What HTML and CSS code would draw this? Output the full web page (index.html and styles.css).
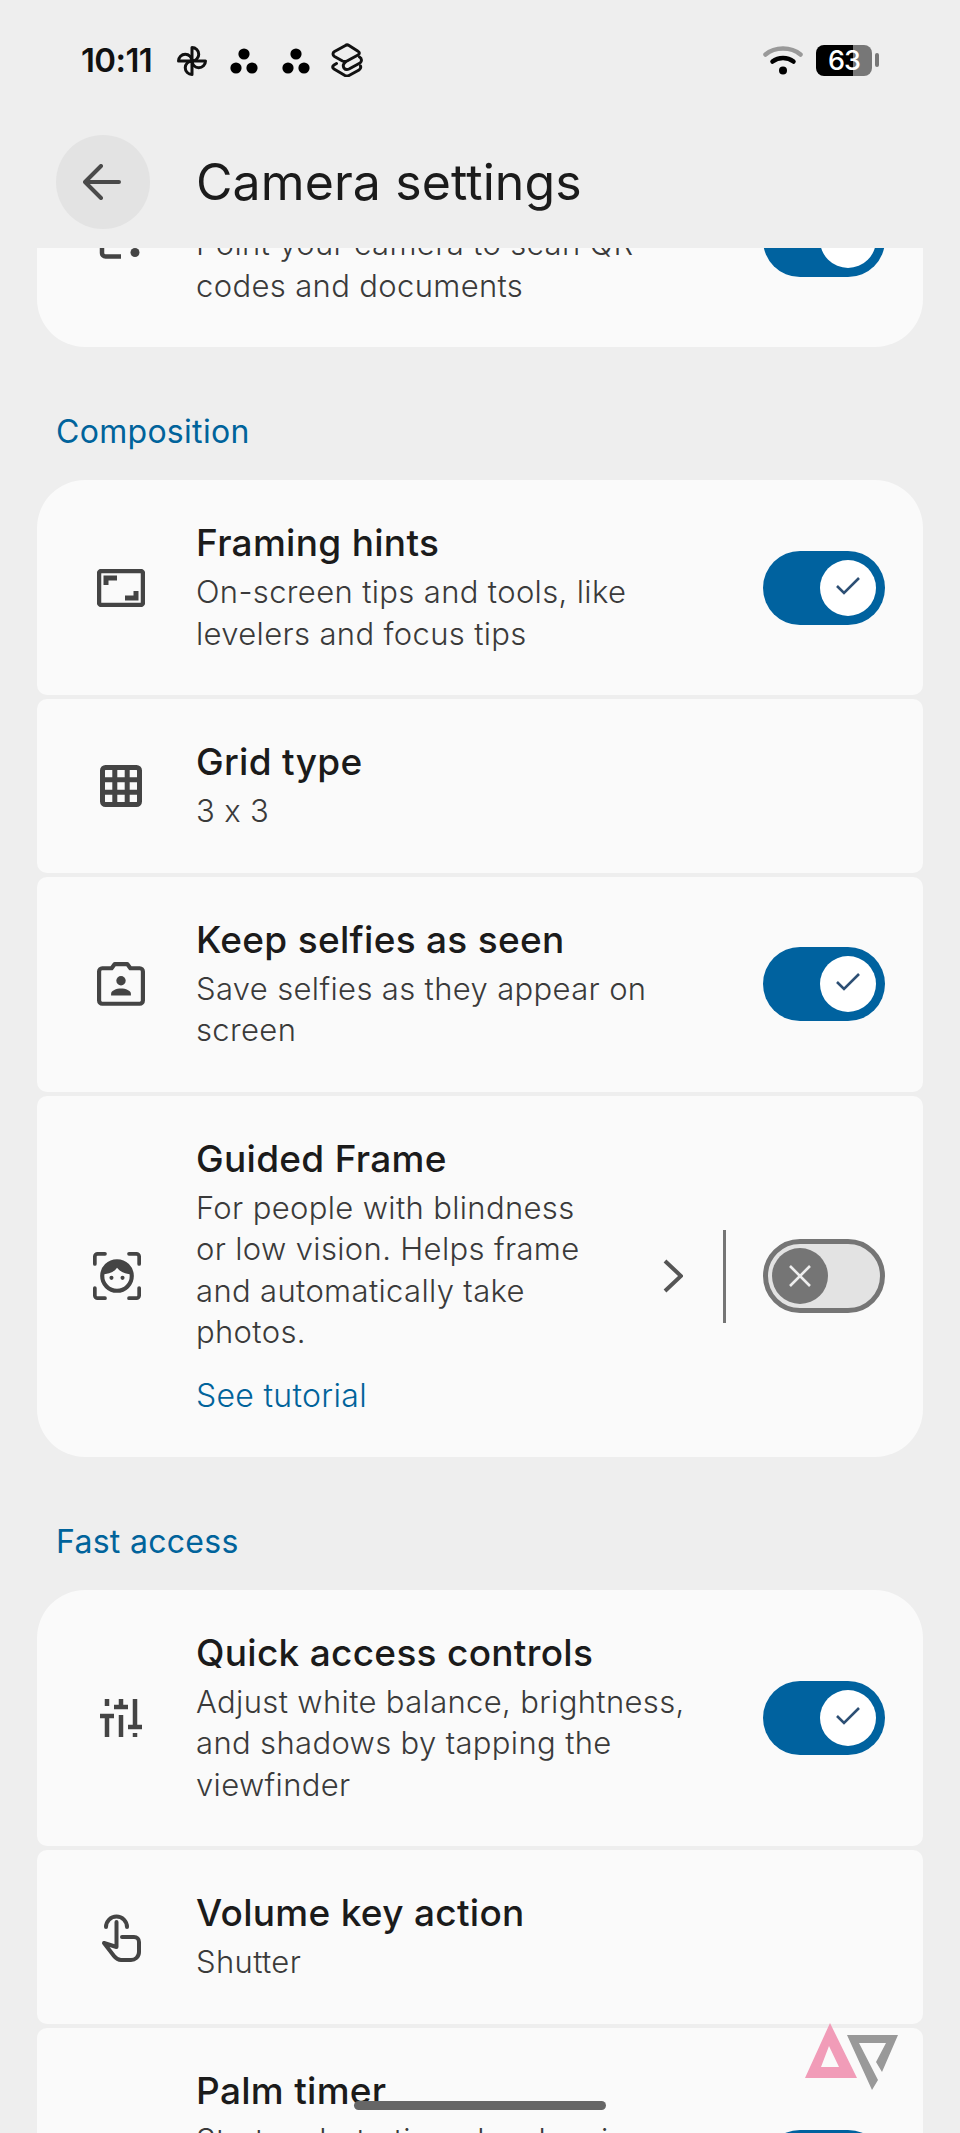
FILE: index.html
```html
<!DOCTYPE html>
<html lang="en">
<head>
    <meta charset="UTF-8">
    <meta name="viewport" content="width=device-width, initial-scale=1.0">
    <title>Camera settings</title>
    <link rel="stylesheet" href="styles.css">
</head>
<body>
    <div class="phone">
        <div class="status-bar">
            <span class="clock">10:11</span>
            <svg class="st-pinwheel" viewBox="0 0 32 32" fill="none" stroke="#111" stroke-width="3" stroke-linejoin="round">
                <path d="M16 16V2.500a6.700 6.700 0 0 1 0 13.500z"/>
                <path d="M16 16h13.500a6.700 6.700 0 0 1-13.500 0z"/>
                <path d="M16 16v13.500a6.700 6.700 0 0 1 0-13.500z"/>
                <path d="M16 16H2.500a6.700 6.700 0 0 1 13.500 0z"/>
            </svg>
            <svg class="st-dots" viewBox="0 0 28 26" fill="#000"><circle cx="14" cy="6" r="5.600"/><circle cx="6" cy="20" r="5.600"/><circle cx="22" cy="20" r="5.600"/></svg>
            <svg class="st-dots" viewBox="0 0 28 26" fill="#000"><circle cx="14" cy="6" r="5.600"/><circle cx="6" cy="20" r="5.600"/><circle cx="22" cy="20" r="5.600"/></svg>
            <svg class="st-stack" viewBox="0 0 32 34" fill="none" stroke="#111" stroke-width="3" stroke-linejoin="round" stroke-linecap="round">
                <path d="M14.500 2.500 3.500 8.500c-2 1.200-2 3.800 0 5l8 4.500c1.500.8 3 .8 4.500 0l11-6c1.800-1 1.800-2.800 0-3.800l-9-5.700c-1.300-.8-2.500-.8-3.500 0z"/>
                <path d="M28.500 14c2.500 1.500 2.500 4.500.5 6l-11 6c-2 1-4 .3-5-1-1.300-1.800-.8-4.500 1.500-6"/>
                <path d="M5.500 20.500 3 22c-1.800 1.200-1.800 3 0 4l11 6.500c1.300.7 2.700.7 4 0l10-5.500c1.500-1 2-2.500 1.500-4"/>
            </svg>
            <div class="status-right">
                <svg class="st-wifi" viewBox="0 0 40 30" fill="none" stroke-linecap="round">
                    <path d="M2.500 9.500C12 1.500 28 1.500 37.500 9.500" stroke="#999" stroke-width="4.500"/>
                    <path d="M9.500 16.500C15.500 11.800 24.500 11.800 30.500 16.500" stroke="#000" stroke-width="4.500"/>
                    <circle cx="20" cy="25.500" r="4" fill="#000"/>
                </svg>
                <div class="battery"><span class="battery-num">63</span></div>
                <span class="battery-nub"></span>
            </div>
        </div>

        <header class="top-bar">
            <div class="back-btn">
                <svg viewBox="0 0 38 36" fill="none" stroke="#4a4a4a" stroke-width="4" stroke-linecap="round" stroke-linejoin="round"><path d="M36 18H3M18 2 2 18l16 16"/></svg>
            </div>
            <h1>Camera settings</h1>
        </header>

        <main class="list">
            <div class="group group-scrolled">
                <div class="row row-last">
                    <div class="row-icon">
                        <svg viewBox="0 0 48 48" fill="none" stroke="#444" stroke-width="4.500"><path d="M5 28v9a3.500 3.500 0 0 0 3.500 3.500H24"/><circle cx="38" cy="36.500" r="4.500" fill="#444" stroke="none"/></svg>
                    </div>
                    <div class="row-text">
                        <div class="row-title">Scan with camera</div>
                        <div class="row-sub">Point your camera to scan QR<br>codes and documents</div>
                    </div>
                    <div class="toggle on"><span class="knob"><svg viewBox="0 0 24 24" fill="none" stroke="#2d4f74" stroke-width="2.600"><path d="M1 10l7 7L23 2"/></svg></span></div>
                </div>
            </div>

            <h2 class="section">Composition</h2>
            <div class="group">
                <div class="row row-first">
                    <div class="row-icon">
                        <svg viewBox="0 0 48 38" fill="none" stroke="#444"><rect x="2" y="2" width="44" height="34" rx="2.500" stroke-width="4.500"/><path d="M9 16V9h11M39 22v7H28" stroke-width="5"/></svg>
                    </div>
                    <div class="row-text">
                        <div class="row-title">Framing hints</div>
                        <div class="row-sub">On-screen tips and tools, like<br>levelers and focus tips</div>
                    </div>
                    <div class="toggle on"><span class="knob"><svg viewBox="0 0 24 24" fill="none" stroke="#2d4f74" stroke-width="2.600"><path d="M1 10l7 7L23 2"/></svg></span></div>
                </div>
                <div class="row">
                    <div class="row-icon">
                        <svg class="icon-grid" viewBox="0 0 42 42" fill="none" stroke="#444" stroke-width="5"><rect x="2.500" y="2.500" width="37" height="37" rx="3"/><path d="M14.800 2v38M27.200 2v38M2 14.800h38M2 27.200h38"/></svg>
                    </div>
                    <div class="row-text">
                        <div class="row-title">Grid type</div>
                        <div class="row-sub">3 x 3</div>
                    </div>
                </div>
                <div class="row">
                    <div class="row-icon">
                        <svg viewBox="0 0 46 42" fill="none" stroke="#444" stroke-width="4" stroke-linejoin="round"><path d="M5 6h9l3-4h12l3 4h9a3 3 0 0 1 3 3v28a3 3 0 0 1-3 3H5a3 3 0 0 1-3-3V9a3 3 0 0 1 3-3z"/><circle cx="23" cy="18" r="4.500" fill="#444" stroke="none"/><path d="M13.500 32v-1.500c0-3 5-5 9.500-5s9.500 2 9.500 5V32z" fill="#444" stroke="none"/></svg>
                    </div>
                    <div class="row-text">
                        <div class="row-title">Keep selfies as seen</div>
                        <div class="row-sub">Save selfies as they appear on<br>screen</div>
                    </div>
                    <div class="toggle on"><span class="knob"><svg viewBox="0 0 24 24" fill="none" stroke="#2d4f74" stroke-width="2.600"><path d="M1 10l7 7L23 2"/></svg></span></div>
                </div>
                <div class="row row-last">
                    <div class="row-icon row-icon-guided">
                        <svg viewBox="0 0 52 52" fill="none" stroke="#444" stroke-width="4"><path d="M2 13V5a3 3 0 0 1 3-3h8M39 2h8a3 3 0 0 1 3 3v8M2 39v8a3 3 0 0 0 3 3h8M50 39v8a3 3 0 0 1-3 3h-8" stroke-linecap="round"/><circle cx="26" cy="26" r="16" stroke-width="4.500"/><path d="M10 24C11 14 18 9 26 9s15 5 16 15c-6 0-12-2-16-7-3 5-10 7-16 7z" fill="#444" stroke="none"/><circle cx="20" cy="28" r="2.200" fill="#444" stroke="none"/><circle cx="32" cy="28" r="2.200" fill="#444" stroke="none"/></svg>
                    </div>
                    <div class="row-text">
                        <div class="row-title">Guided Frame</div>
                        <div class="row-sub">For people with blindness<br>or low vision. Helps frame<br>and automatically take<br>photos.</div>
                        <div class="row-link">See tutorial</div>
                    </div>
                    <svg class="chevron" viewBox="0 0 20 34" fill="none" stroke="#555" stroke-width="4"><path d="M2 2l16 15L2 32"/></svg>
                    <span class="divider"></span>
                    <div class="toggle off"><span class="knob"><svg viewBox="0 0 24 24" fill="none" stroke="#eee" stroke-width="2.600"><path d="M2 2l20 20M22 2 2 22"/></svg></span></div>
                </div>
            </div>

            <h2 class="section">Fast access</h2>
            <div class="group">
                <div class="row row-first">
                    <div class="row-icon">
                        <svg class="icon-sliders" viewBox="0 0 42 38" fill="none" stroke="#444" stroke-width="4.500"><path d="M7 0v7M7 17v21M21 0v8M21 16v22M35 0v27M35 34v4M0 17h14M14 8h14M28 28h14"/></svg>
                    </div>
                    <div class="row-text">
                        <div class="row-title">Quick access controls</div>
                        <div class="row-sub">Adjust white balance, brightness,<br>and shadows by tapping the<br>viewfinder</div>
                    </div>
                    <div class="toggle on"><span class="knob"><svg viewBox="0 0 24 24" fill="none" stroke="#2d4f74" stroke-width="2.600"><path d="M1 10l7 7L23 2"/></svg></span></div>
                </div>
                <div class="row">
                    <div class="row-icon">
                        <svg class="icon-touch" viewBox="0 0 40 50" fill="none" stroke="#444" stroke-width="4" stroke-linecap="round" stroke-linejoin="round"><path d="M5 15a10.500 10.500 0 1 1 21 0"/><path d="M15.500 10v25L3 31l10 13c2 2.500 4 4 7 4h10c4 0 8-3 8-8V30c0-3-2-5-5-5H21"/></svg>
                    </div>
                    <div class="row-text">
                        <div class="row-title">Volume key action</div>
                        <div class="row-sub">Shutter</div>
                    </div>
                </div>
                <div class="row row-palm">
                    <div class="row-icon"></div>
                    <div class="row-text">
                        <div class="row-title">Palm timer</div>
                        <div class="row-sub">Start a photo timer by showing<br>your palm</div>
                    </div>
                    <div class="toggle on"><span class="knob"><svg viewBox="0 0 24 24" fill="none" stroke="#2d4f74" stroke-width="2.600"><path d="M1 10l7 7L23 2"/></svg></span></div>
                </div>
            </div>
        </main>

        <svg class="watermark" viewBox="0 0 94 68">
            <path d="M25 0 52 55H0zM24 23 16 44h18z" fill="#f19cb8" fill-rule="evenodd"/>
            <path d="M42 12H93L77 49 71 39 81 20H54L73 57 67 67z" fill="#999"/>
        </svg>
        <div class="home-pill"></div>
    </div>
</body>
</html>
```

FILE: styles.css
```css
* {
    box-sizing: border-box;
}
body {
    margin: 0;
    background: #eeeeee;
    font-family: Inter, Roboto, sans-serif;
    font-feature-settings: "calt" 0;
}
.phone {
    position: relative;
    width: 960px;
    height: 2133px;
    overflow: hidden;
    display: flex;
    flex-direction: column;
}

/* status bar */
.status-bar {
    height: 120px;
    flex: none;
    display: flex;
    align-items: center;
    padding: 0 76px 0 81px;
}
.clock {
    font-size: 33px;
    font-weight: 600;
    color: #111;
    letter-spacing: -0.6px;
    width: 95px;
}
.st-pinwheel {
    width: 32px;
    height: 32px;
    margin-top: 1px;
}
.st-dots {
    width: 28px;
    height: 26px;
    margin-left: 22px;
    margin-top: 1px;
}
.st-dots + .st-dots {
    margin-left: 24px;
}
.st-stack {
    width: 32px;
    height: 34px;
    margin-left: 21px;
}
.status-right {
    margin-left: auto;
    display: flex;
    align-items: center;
    margin-right: 5px;
}
.st-wifi {
    width: 40px;
    height: 30px;
}
.battery {
    width: 56px;
    height: 31px;
    margin-left: 13px;
    border-radius: 8px;
    background: linear-gradient(90deg, #000 0, #000 66%, #777 66%, #777 100%);
    display: flex;
    align-items: center;
    justify-content: center;
}
.battery-num {
    color: #fff;
    font-size: 27px;
    font-weight: 500;
    letter-spacing: -1px;
}
.battery-nub {
    width: 4px;
    height: 14px;
    margin-left: 3px;
    background: #777;
    border-radius: 2px;
}

/* header */
.top-bar {
    height: 128px;
    flex: none;
    display: flex;
    align-items: flex-start;
    padding: 15px 0 0 56px;
    background: #eeeeee;
}
.back-btn {
    width: 94px;
    height: 94px;
    border-radius: 50%;
    background: #e3e3e3;
    display: flex;
    align-items: center;
    justify-content: center;
}
.back-btn svg {
    width: 38px;
    height: 36px;
    margin-right: 3px;
}
.top-bar h1 {
    margin: 0 0 0 46px;
    font-size: 50px;
    line-height: 94px;
    font-weight: 400;
    letter-spacing: 0.1px;
    color: #1b1b1b;
}

/* list */
.list {
    flex: 1;
    overflow: hidden;
}
.group {
    margin: 0 37px;
    display: flex;
    flex-direction: column;
    gap: 4px;
}
.group-scrolled {
    margin-top: -116px;
}
.section {
    margin: 0;
    height: 133px;
    padding: 65px 0 0 56px;
    font-size: 32px;
    line-height: 40px;
    font-weight: 400;
    letter-spacing: 0.3px;
    color: #00639b;
}
.row {
    display: flex;
    align-items: center;
    padding: 41px 38px 41px 60px;
    background: #fafafa;
    border-radius: 10px;
}
.row-first {
    border-top-left-radius: 48px;
    border-top-right-radius: 48px;
}
.row-last {
    border-bottom-left-radius: 48px;
    border-bottom-right-radius: 48px;
}
.row-palm {
    min-height: 278px;
}
.row-palm .row-text {
    align-self: flex-start;
}
.row-icon {
    width: 48px;
    flex: none;
    margin-right: 51px;
    display: flex;
    justify-content: center;
}
.row-icon svg {
    width: 48px;
    display: block;
}
.row-icon .icon-grid,
.row-icon .icon-sliders {
    width: 42px;
}
.row-icon .icon-touch {
    width: 40px;
}
.row-icon-guided {
    justify-content: flex-start;
    margin-left: -4px;
    margin-right: 55px;
}
.row-icon-guided svg {
    width: 52px;
}
.row-text {
    flex: 1;
    min-width: 0;
}
.row-title {
    font-size: 37px;
    line-height: 44px;
    margin-bottom: 6px;
    font-weight: 450;
    letter-spacing: 0.3px;
    color: #1b1b1b;
}
.row-sub {
    font-size: 31px;
    line-height: 41.500px;
    font-weight: 300;
    letter-spacing: 0.35px;
    color: #3a3a3a;
}
.row-link {
    margin-top: 22px;
    font-size: 32px;
    line-height: 41px;
    font-weight: 300;
    letter-spacing: 0.3px;
    color: #00639b;
}

/* toggles */
.toggle {
    width: 122px;
    height: 74px;
    flex: none;
    border-radius: 37px;
    display: flex;
    align-items: center;
}
.toggle.on {
    background: #00629f;
    justify-content: flex-end;
    padding-right: 9px;
}
.toggle.off {
    background: #e3e3e3;
    border: 5px solid #757575;
    padding-left: 4px;
}
.knob {
    width: 56px;
    height: 56px;
    border-radius: 50%;
    display: flex;
    align-items: center;
    justify-content: center;
}
.toggle.on .knob {
    background: #fff;
}
.toggle.off .knob {
    background: #757575;
}
.knob svg {
    width: 24px;
    height: 24px;
}
.chevron {
    width: 20px;
    height: 34px;
    flex: none;
}
.divider {
    width: 3px;
    height: 93px;
    flex: none;
    margin: 0 37px 0 40px;
    background: #757575;
}

/* overlays */
.watermark {
    position: absolute;
    left: 805px;
    top: 2023px;
    width: 94px;
    height: 68px;
}
.home-pill {
    position: absolute;
    left: 354px;
    top: 2101px;
    width: 252px;
    height: 9px;
    border-radius: 5px;
    background: #666;
}
```
